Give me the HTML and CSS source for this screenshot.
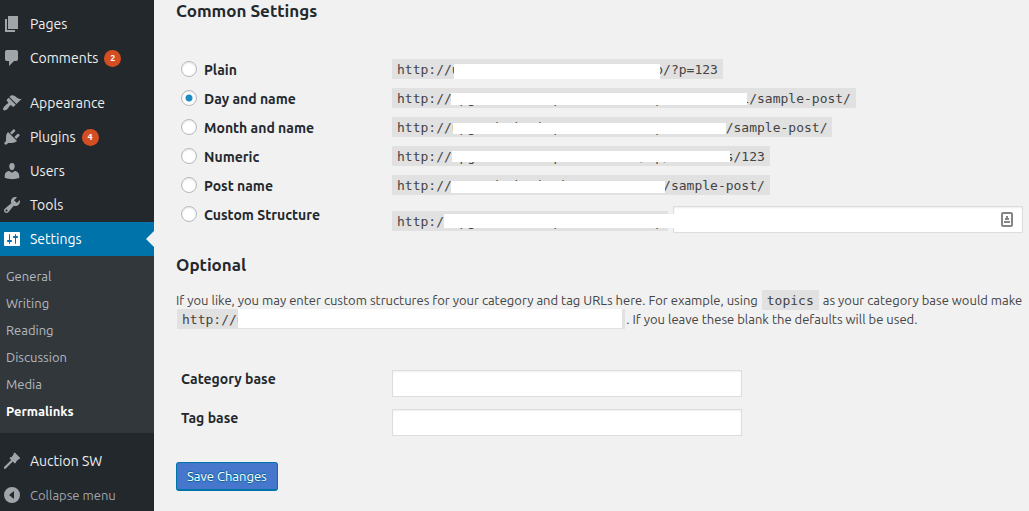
FILE: index.html
```html
<!DOCTYPE html>
<html lang="en">
<head>
    <meta charset="UTF-8">
    <meta name="viewport" content="width=device-width, initial-scale=1.0">
    <title>Permalink Settings</title>
    <link rel="stylesheet" href="styles.css">
</head>
<body>

<!-- Admin menu -->
<nav class="sidebar">
    <a href="#" class="menu-item">
        <svg class="icon" viewBox="0 0 20 20"><path d="M6 15V2h10v13H6zm-1 1h8v2H3V5h2v11z"/></svg>
        Pages
    </a>
    <a href="#" class="menu-item">
        <svg class="icon" viewBox="0 0 20 20"><path d="M5 2h9q.82 0 1.41.59T16 4v7q0 .82-.59 1.41T14 13h-2l-5 5v-5H5q-.82 0-1.41-.59T3 11V4q0-.82.59-1.41T5 2z"/></svg>
        Comments <span class="badge">2</span>
    </a>
    <a href="#" class="menu-item group">
        <svg class="icon" viewBox="0 0 20 20"><path d="M14.48 11.06L7.41 3.99l1.5-1.5c.5-.56 2.3-.47 3.51.32 1.21.8 1.43 1.28 2.91 2.1 1.18.64 2.45 1.26 4.45.85zm-.71.71L6.7 4.7 4.93 6.47c-.39.39-.39 1.02 0 1.41l1.06 1.06c.39.39.39 1.03 0 1.42-.6.6-1.43 1.11-2.21 1.69-.35.26-.7.53-1.01.84C1.43 14.23.4 16.08 1.4 17.07c.99 1 2.84-.03 4.18-1.36.31-.31.58-.66.85-1.02.57-.78 1.08-1.61 1.69-2.21.39-.39 1.02-.39 1.41 0l1.06 1.06c.39.39 1.02.39 1.41 0z"/></svg>
        Appearance
    </a>
    <a href="#" class="menu-item">
        <svg class="icon" viewBox="0 0 20 20"><path d="M13.11 4.36L9.87 7.6 8 5.73l3.24-3.24c.35-.34 1.05-.2 1.56.32.52.51.66 1.21.31 1.55zm-8 1.77l.91-1.12 9.01 9.01-1.19.84c-.71.71-2.63 1.16-3.82 1.16H6.14L4.9 17.26c-.59.59-1.54.59-2.12 0-.59-.58-.59-1.53 0-2.12l1.24-1.24v-3.88c0-1.13.4-3.19 1.09-3.89zm7.26 3.97l3.24-3.24c.34-.35 1.04-.21 1.55.31.52.51.66 1.21.31 1.55l-3.24 3.25z"/></svg>
        Plugins <span class="badge">4</span>
    </a>
    <a href="#" class="menu-item">
        <svg class="icon" viewBox="0 0 20 20"><path d="M10 9.25c-2.27 0-2.73-3.44-2.73-3.44C7 4.02 7.82 2 9.97 2c2.16 0 2.98 2.02 2.71 3.81 0 0-.41 3.44-2.68 3.44zm0 2.57L12.72 10c2.39 0 4.52 2.33 4.52 4.53v2.49s-3.65 1.13-7.24 1.13c-3.65 0-7.24-1.13-7.24-1.13v-2.49c0-2.25 1.94-4.48 4.47-4.48z"/></svg>
        Users
    </a>
    <a href="#" class="menu-item">
        <svg class="icon" viewBox="0 0 20 20"><path d="M16.68 9.77c-1.34 1.34-3.3 1.67-4.95.99l-5.41 6.52c-.99.99-2.59.99-3.58 0s-.99-2.59 0-3.57l6.52-5.42c-.68-1.65-.35-3.61.99-4.95 1.28-1.28 3.12-1.62 4.72-1.06l-2.89 2.89 2.82 2.82 2.86-2.87c.53 1.58.18 3.39-1.08 4.65zM3.81 16.21c.4.39 1.04.39 1.43 0 .4-.4.4-1.04 0-1.43-.39-.4-1.03-.4-1.43 0-.39.39-.39 1.03 0 1.43z"/></svg>
        Tools
    </a>
    <a href="#" class="menu-item current">
        <svg class="icon" viewBox="0 0 20 20"><path d="M18 16V4c0-.55-.45-1-1-1H3c-.55 0-1 .45-1 1v12c0 .55.45 1 1 1h14c.55 0 1-.45 1-1zM8 11h1c.55 0 1 .45 1 1s-.45 1-1 1H8v1.5c0 .28-.22.5-.5.5s-.5-.22-.5-.5V13H6c-.55 0-1-.45-1-1s.45-1 1-1h1V5.5c0-.28.22-.5.5-.5s.5.22.5.5V11zm5-2h-1c-.55 0-1-.45-1-1s.45-1 1-1h1V5.5c0-.28.22-.5.5-.5s.5.22.5.5V7h1c.55 0 1 .45 1 1s-.45 1-1 1h-1v5.5c0 .28-.22.5-.5.5s-.5-.22-.5-.5V9z"/></svg>
        Settings
    </a>
    <div class="submenu">
        <a href="#">General</a>
        <a href="#">Writing</a>
        <a href="#">Reading</a>
        <a href="#">Discussion</a>
        <a href="#">Media</a>
        <a href="#" class="active">Permalinks</a>
    </div>
    <a href="#" class="menu-item group">
        <svg class="icon" viewBox="0 0 20 20"><path d="M11.500 2.500l1.300-.9 5.400 5.400-.9 1.300-.8-.1-2.500 2.500.1.900-1.200 1-2.100-2.100-7 7.100c-1.100 1-2.700-.5-1.700-1.600l7.100-7-1.700-1.700 1-1.200.9.100 2.200-2.600z"/></svg>
        Auction SW
    </a>
    <button type="button" class="collapse">
        <svg class="icon" viewBox="0 0 20 20"><path fill-rule="evenodd" d="M10 2a8 8 0 1 0 0 16 8 8 0 0 0 0-16zm2 4v8l-5-4z"/></svg>
        Collapse menu
    </button>
</nav>

<main class="content">
    <form>
        <h2>Common Settings</h2>
        <table class="form-table">
            <tr>
                <th><label><input type="radio" name="structure"> Plain</label></th>
                <td><code>http://u                         o/?p=123<span class="mask mask-plain"></span></code></td>
            </tr>
            <tr>
                <th><label><input type="radio" name="structure" checked> Day and name</label></th>
                <td><code>http://upg          p            p          1/sample-post/<span class="mask mask-day"></span></code></td>
            </tr>
            <tr>
                <th><label><input type="radio" name="structure"> Month and name</label></th>
                <td><code>http://upg  d  h  h p            p        /sample-post/<span class="mask mask-month"></span></code></td>
            </tr>
            <tr>
                <th><label><input type="radio" name="structure"> Numeric</label></th>
                <td><code>http://upg          p          / p/       s/123<span class="mask mask-numeric"></span></code></td>
            </tr>
            <tr>
                <th><label><input type="radio" name="structure"> Post name</label></th>
                <td><code>http://     d  h  h  h            /sample-post/<span class="mask mask-post"></span></code></td>
            </tr>
            <tr>
                <th><label><input type="radio" name="structure"> Custom Structure</label></th>
                <td>
                    <div class="custom">
                        <code>http://upg          p            p<span class="mask mask-custom"></span></code>
                        <div class="custom-field">
                            <input type="text" class="mono" aria-label="Custom structure" value="/%year%/%monthnum%/%day%/%postname%/">
                            <span class="mask mask-field"></span>
                            <svg class="field-icon" viewBox="0 0 12 15"><rect x="1" y="1" width="10" height="13" rx="1" fill="#fff" stroke="#858585" stroke-width="2"/><path fill="#858585" d="M5 4h2v2h1v2H4V6h1zM3 9h6v2H3z"/></svg>
                        </div>
                    </div>
                </td>
            </tr>
        </table>

        <h2>Optional</h2>
        <p>If you like, you may enter custom structures for your category and tag URLs here. For example, using <code>topics</code> as your category base would make<br>
        <code>http://u                                                <span class="mask mask-example"></span></code>. If you leave these blank the defaults will be used.</p>

        <table class="form-table">
            <tr>
                <th><label for="category-base">Category base</label></th>
                <td><input type="text" id="category-base"></td>
            </tr>
            <tr>
                <th><label for="tag-base">Tag base</label></th>
                <td><input type="text" id="tag-base"></td>
            </tr>
        </table>

        <button type="submit" class="save">Save Changes</button>
    </form>
</main>

</body>
</html>
```
FILE: styles.css
```css
* {
    box-sizing: border-box;
}

body {
    margin: 0;
    display: flex;
    min-height: 100vh;
    background: #f1f1f1;
    color: #444;
    font-family: Ubuntu, "Noto Sans", sans-serif;
    font-size: 13px;
    line-height: 19px;
    overflow: hidden;
}

/* Sidebar */
.sidebar {
    flex: 0 0 154px;
    padding-top: 7px;
    background: #23282d;
}

.menu-item {
    position: relative;
    display: flex;
    align-items: center;
    gap: 8px;
    height: 34px;
    padding-left: 2px;
    color: #eee;
    font-size: 14px;
    text-decoration: none;
}

.group {
    margin-top: 11px;
}

.icon {
    width: 20px;
    height: 20px;
    fill: #a0a5aa;
}

.badge {
    width: 17px;
    height: 17px;
    margin-left: -2px;
    border-radius: 50%;
    background: #d54e21;
    color: #fff;
    font-size: 9px;
    font-weight: bold;
    line-height: 17px;
    text-align: center;
}

.current {
    background: #0073aa;
    color: #fff;
}

.current .icon {
    fill: #fff;
}

.current::after {
    content: "";
    position: absolute;
    top: 9px;
    right: 0;
    border: 8px solid transparent;
    border-left: 0;
    border-right-color: #f1f1f1;
}

.submenu {
    padding: 7px 0 8px;
    background: #32373c;
}

.submenu a {
    display: block;
    padding-left: 6px;
    color: #b4b9be;
    line-height: 27px;
    text-decoration: none;
}

.submenu .active {
    color: #fff;
    font-weight: bold;
}

.collapse {
    display: flex;
    align-items: center;
    gap: 8px;
    width: 100%;
    height: 34px;
    padding: 0 0 0 2px;
    border: 0;
    background: none;
    color: #a0a5aa;
    font: inherit;
}

/* Content */
.content {
    flex: 1;
    min-width: 0;
    padding-left: 22px;
}

h2 {
    margin: 0 0 15px;
    color: #23282d;
    font-size: 17px;
    line-height: 22px;
}

p {
    margin: 0 0 35px;
    white-space: nowrap;
}

h2 + .form-table {
    margin: 33px 0 15px;
}

.form-table {
    width: 100%;
    border-collapse: collapse;
}

.form-table th {
    width: 216px;
    padding: 1px 5px 0;
    color: #23282d;
    font-size: 14px;
    line-height: 28px;
    text-align: left;
    vertical-align: top;
}

.form-table td {
    height: 29px;
    padding: 0;
}

.form-table label {
    display: flex;
    align-items: center;
    gap: 7px;
}

code {
    position: relative;
    padding: 3px 5px 2px;
    margin: 0 1px;
    background: #e1e1e1;
    font-family: "DejaVu Sans Mono", monospace;
    font-size: 13px;
    white-space: pre;
}

.form-table code {
    margin: 0;
}

input[type="radio"] {
    appearance: none;
    width: 16px;
    height: 16px;
    margin: 0 0 2px;
    border: 1px solid #b4b9be;
    border-radius: 50%;
    background: #fff;
    box-shadow: inset 0 1px 2px rgba(0, 0, 0, 0.1);
}

input[type="radio"]:checked {
    background: radial-gradient(circle, #1e8cbe 3px, #fff 4px);
}

input[type="text"] {
    display: block;
    width: 350px;
    height: 27px;
    margin: 6px 0;
    padding: 3px 5px;
    border: 1px solid #ddd;
    background: #fff;
    box-shadow: inset 0 1px 2px rgba(0, 0, 0, 0.07);
    color: #32373c;
    font-size: 14px;
}

input.mono {
    font-family: "DejaVu Sans Mono", monospace;
}

.custom {
    display: flex;
    align-items: center;
    gap: 5px;
}

.form-table .custom code {
    margin-top: 3px;
    line-height: 15px;
}

.custom-field {
    position: relative;
}

/* White strips over the hidden part of the addresses */
.mask {
    position: absolute;
    top: 5px;
    height: 12px;
    background: #fff;
}

.mask-plain {
    left: 62px;
    right: 63px;
    height: 15px;
}

.mask-day {
    left: 59px;
    right: 109px;
}

.mask-month {
    top: 6px;
    left: 61px;
    right: 106px;
    height: 11px;
}

.mask-numeric {
    left: 60px;
    right: 40px;
    height: 11px;
}

.mask-post {
    top: 6px;
    left: 59px;
    right: 105px;
}

.mask-custom {
    top: 3px;
    left: 52px;
    right: -6px;
    height: 14px;
    z-index: 1;
}

.mask-field {
    top: 14px;
    left: 1px;
    right: 24px;
    height: 14px;
}

.mask-example {
    top: 0;
    left: 61px;
    right: 3px;
    height: 19px;
}

.field-icon {
    position: absolute;
    top: 12px;
    right: 10px;
    width: 12px;
    height: 15px;
}

.save {
    height: 29px;
    margin-top: 20px;
    padding: 0 10px;
    border: 1px solid #0073aa;
    border-bottom-width: 2px;
    border-radius: 3px;
    background: #4677cd;
    color: #fff;
    font: inherit;
    text-shadow: 0 -1px 1px #006799, 0 1px 1px #006799;
}
```
